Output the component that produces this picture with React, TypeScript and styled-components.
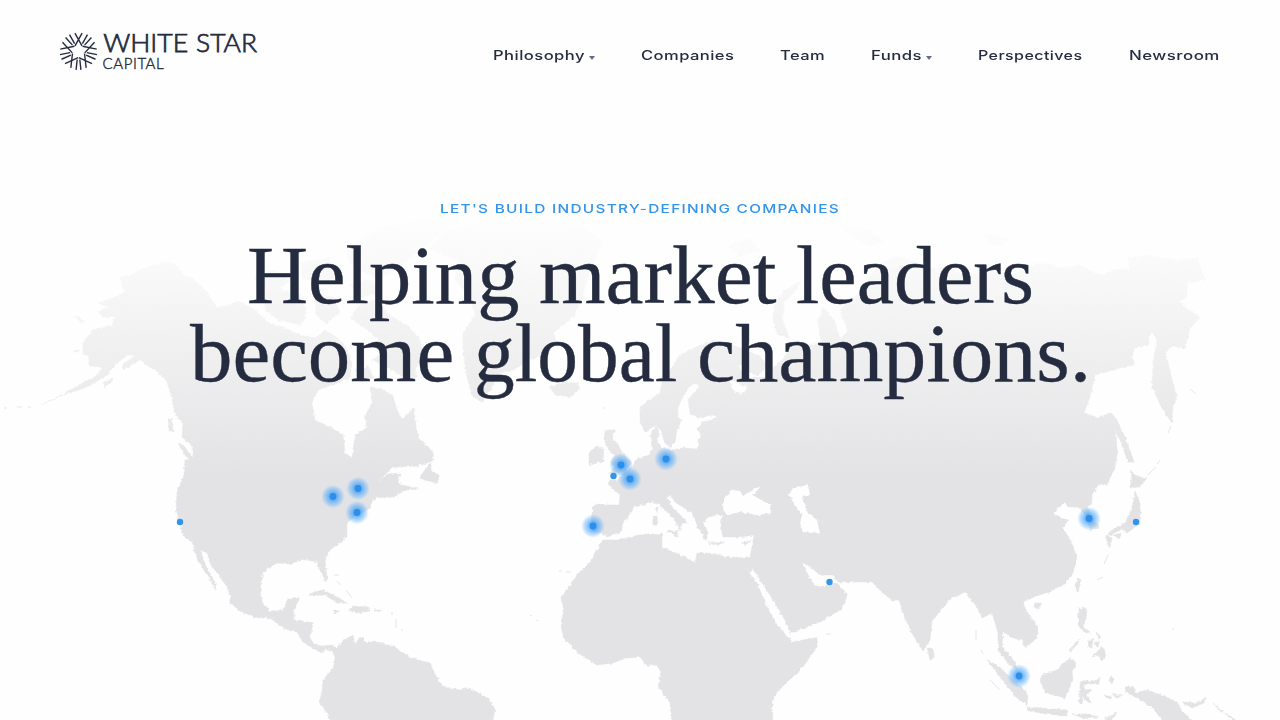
import React, { useLayoutEffect, useRef, useState } from 'react';
import styled, { createGlobalStyle } from 'styled-components';

const INK = '#252c40';
const BLUE = '#3294ea';

const GlobalStyle = createGlobalStyle`
  *, *::before, *::after { box-sizing: border-box; }
  body { margin: 0; background: #fefefe; overflow: hidden; }
`;

const Page = styled.div`
  position: relative;
  width: 1280px;
  height: 720px;
  overflow: hidden;
  background: #fefefe;
  color: ${INK};
`;

const MapLayer = styled.svg`
  position: absolute;
  inset: 0;
  width: 1280px;
  height: 720px;
`;

const Header = styled.header`
  position: relative;
  display: flex;
  justify-content: space-between;
  align-items: flex-start;
  padding: 30px 60px 0;
  height: 110px;
`;

const Logo = styled.svg`
  display: block;
  width: 200px;
  height: 42px;
  overflow: visible;
`;

const Nav = styled.nav`
  display: flex;
  gap: 46px;
  padding-top: 16px;
`;

const NavItem = styled.a`
  display: flex;
  align-items: center;
  gap: 4px;
  font: 500 12.8px/20px Inter, sans-serif;
  letter-spacing: 0.35px;
  color: ${INK};
  text-decoration: none;
`;

const Caret = styled.i`
  margin-top: 4px;
  border: solid transparent;
  border-width: 4px 3px 0;
  border-top-color: #626c82;
`;

const Hero = styled.main`
  position: relative;
  display: flex;
  flex-direction: column;
  align-items: center;
`;

const Eyebrow = styled.p`
  margin: 89px 0 0;
  font: 500 11.8px/20px Inter, sans-serif;
  letter-spacing: 1px;
  color: ${BLUE};
`;

const Headline = styled.h1`
  display: flex;
  flex-direction: column;
  align-items: center;
  margin: 17px 0 0;
  font: 400 83px/78px 'Liberation Serif', serif;
  -webkit-text-stroke: 0.35px ${INK};
`;

const HeadlineRow = styled.span`
  display: flex;
  gap: 20px;
  padding-left: 1px;
`;

const FitBox = styled.span<{ $width: number }>`
  display: block;
  width: ${(p) => p.$width}px;
  white-space: nowrap;
`;

const FitInner = styled.span`
  display: inline-block;
  transform-origin: 0 50%;
`;

/* Stretches a single line of text to an exact width. */
function FitText({ width, children }: { width: number; children: string }) {
  const ref = useRef<HTMLSpanElement>(null);
  const [scale, setScale] = useState(1);
  useLayoutEffect(() => {
    if (ref.current) setScale(width / ref.current.offsetWidth);
  }, [width]);
  return (
    <FitBox $width={width}>
      <FitInner ref={ref} style={{ transform: `scaleX(${scale})` }}>{children}</FitInner>
    </FitBox>
  );
}

const LAND = [
  // North and South America
  '168,262 160,263 150,266 140,270 131,275 121,277 122,285 125,292 113,298 98,303 108,307 98,312 103,317 115,317 112,325 93,330 88,337 83,342 83,353 90,357 88,365 102,368 98,375 83,383 67,392 42,405 63,395 87,387 107,375 117,363 128,355 135,355 123,365 123,370 140,360 147,365 158,372 167,382 172,400 177,417 183,423 182,437 188,442 193,447 193,459 185,460 184,475 177,492 176,510 180,523 183,535 192,542 195,553 202,567 210,580 216,590 215,582 208,570 203,560 201,550 207,553 210,563 220,577 228,588 231,597 229,602 240,611 257,618 270,618 283,628 297,632 303,642 313,648 322,653 325,649 332,650 335,657 334,667 323,680 322,693 319,702 327,713 332,724 492,724 495,710 490,700 470,688 460,690 443,687 437,678 430,663 410,658 395,647 377,642 367,642 360,637 355,645 353,635 343,640 337,648 332,645 323,646 315,645 310,638 313,623 303,621 293,620 295,608 300,597 288,599 283,610 270,611 262,602 260,590 263,572 275,563 290,564 303,559 317,562 321,572 326,582 327,577 325,562 328,552 347,537 347,523 352,518 370,508 372,500 377,497 390,498 407,490 418,489 407,486 398,483 400,473 388,474 377,482 393,467 417,466 433,461 433,452 418,437 415,420 414,408 402,419 397,410 393,396 380,388 370,387 372,402 365,417 367,428 355,435 352,458 345,453 343,435 330,427 315,420 312,403 318,390 335,384 350,378 352,362 345,345 335,336 325,330 315,338 300,335 285,328 268,322 255,310 240,301 217,308 207,292 195,280 183,275 177,265',
  // Europe, Asia and Africa
  '593,507 595,504 610,505 619,505 620,495 608,484 610,480 618,480 622,475 632,467 638,458 650,455 652,447 650,435 657,425 659,435 657,442 663,448 670,450 683,448 698,449 698,440 702,435 697,430 703,422 718,418 713,415 698,418 690,413 688,400 700,385 693,383 685,393 678,407 678,417 682,420 677,430 675,442 670,447 665,443 660,428 655,425 645,432 640,423 640,407 660,393 662,383 672,367 680,355 700,345 713,340 728,343 745,350 760,356 768,366 758,376 745,370 748,362 738,366 748,378 765,377 775,366 785,357 790,347 806,345 821,343 818,322 823,307 834,320 840,338 848,332 840,310 850,300 862,292 870,276 882,262 897,256 915,262 930,268 950,268 965,276 985,270 1013,274 1040,263 1063,268 1080,265 1100,275 1120,268 1130,270 1127,258 1147,255 1177,260 1198,258 1200,268 1205,280 1187,283 1187,297 1178,302 1200,318 1190,328 1185,348 1173,346 1165,352 1168,363 1173,383 1177,397 1173,407 1172,423 1163,410 1152,387 1153,363 1157,340 1153,333 1148,337 1150,345 1135,347 1132,355 1135,365 1120,368 1095,375 1090,397 1084,413 1098,418 1110,413 1115,430 1118,450 1115,467 1107,485 1098,485 1092,495 1092,503 1087,507 1092,517 1099,527 1090,530 1087,517 1079,507 1068,507 1065,502 1053,513 1060,517 1068,520 1063,528 1072,543 1077,557 1073,573 1063,585 1050,592 1038,595 1023,602 1027,612 1038,627 1037,638 1025,648 1022,640 1010,637 1003,630 1002,647 1015,662 1017,670 1007,662 998,650 998,633 992,613 982,618 977,607 965,592 950,599 940,612 932,621 930,640 923,651 913,635 905,618 899,600 892,600 883,593 872,582 855,582 838,582 833,575 820,575 808,565 802,563 812,582 818,587 830,585 837,583 848,595 840,610 820,622 790,633 785,620 770,595 752,568 750,573 743,565 757,583 767,607 775,622 787,637 793,642 817,637 817,647 803,667 777,692 772,703 773,724 673,724 670,703 658,687 661,673 657,665 647,666 640,657 627,658 613,663 597,665 578,653 563,637 561,623 564,610 561,598 577,575 590,562 603,540 617,540 640,535 662,534 662,547 687,558 695,563 697,553 707,553 727,557 750,558 754,535 740,537 723,537 720,523 723,515 715,515 707,518 703,523 708,532 706,541 697,525 692,513 675,502 670,495 667,498 673,508 688,523 682,523 680,531 675,520 660,505 653,502 635,507 623,523 620,533 607,537 602,533 592,532 591,520',
  // Greenland, Iceland, Canadian Arctic
  '463,333 463,353 467,377 473,397 483,402 490,390 500,373 513,370 530,360 547,353 557,343 553,333 573,317 583,297 590,270 603,242 580,225 530,219 480,222 445,232 430,248 460,262 455,280 470,297 475,315',
  '550,387 556,385 563,382 577,383 580,388 570,397 555,395',
  '350,318 362,302 376,300 390,315 410,328 420,340 424,355 415,370 418,378 405,377 395,372 385,365 372,360 387,348 370,332',
  '345,248 380,228 430,218 450,226 420,250 396,270 375,278 350,264',
  '264,292 280,289 300,295 307,312 301,325 280,320 265,310',
  '255,277 275,270 290,282 275,291 258,290',
  '315,300 332,296 340,312 326,324 316,315',
  '300,262 328,258 340,274 320,284 303,278',
  '350,284 372,280 380,292 360,298',
  '355,370 368,366 374,378 362,382',
  // British Isles
  '605,430 615,430 612,438 618,445 622,452 631,463 625,472 608,474 615,467 610,462 615,455 610,452 605,443',
  '589,465 589,452 597,446 604,448 603,461',
  // Arctic Eurasia
  '773,322 774,305 783,292 800,281 797,288 785,302 782,318 789,338 778,335',
  '728,246 750,238 760,250 740,256',
  '838,226 868,230 884,241 868,246',
  '985,234 1010,238 1000,246 988,243',
  // Pacific rim islands
  '1110,413 1116,418 1125,437 1134,462 1128,462 1120,440 1113,425',
  '1130,470 1137,476 1147,478 1140,487 1130,488 1132,478',
  '1135,491 1140,503 1141,523 1127,533 1122,529 1110,535 1108,533 1117,527 1125,523 1130,513 1133,503',
  '1106,535 1112,538 1110,548 1107,543',
  '1114,535 1122,533 1119,539',
  '1078,578 1081,580 1078,593 1075,587',
  '1035,603 1042,603 1038,609 1034,607',
  '1079,608 1087,609 1086,620 1083,627 1090,632 1086,633 1078,625',
  '1097,652 1103,647 1106,655 1102,661 1098,655 1092,657',
  '1088,641 1093,639 1092,648 1089,647', '1096,632 1101,637 1098,640', '1094,643 1099,641 1098,648',
  '1069,650 1079,639 1078,643 1071,651',
  '1070,657 1076,663 1072,672 1073,680 1065,698 1045,693 1040,680 1042,675 1057,670',
  '987,660 997,665 1010,677 1023,688 1028,695 1027,705 1017,698 1000,677',
  '1027,707 1042,708 1067,710 1067,716 1047,714 1029,711',
  '1080,682 1098,680 1100,677 1099,683 1083,685 1085,690 1092,689 1086,695 1092,703 1087,702 1083,696 1082,704 1078,702 1080,692',
  '1111,676 1114,679 1112,684 1109,681', '1104,696 1112,696 1110,699', '1113,694 1122,696 1115,698',
  '1072,714 1087,714 1098,717 1083,718', '1104,719 1117,712 1111,721',
  '1125,687 1133,686 1135,693 1147,690 1162,695 1177,702 1182,711 1195,724 1165,724 1160,717 1152,707 1137,698 1126,692',
  '1182,702 1198,703 1206,697 1204,703 1192,708', '1214,704 1223,712 1220,712', '1226,713 1237,721 1232,720',
  '927,647 933,649 935,657 930,660',
  // Mediterranean
  '668,531 678,531 677,537', '653,516 658,516 657,525 653,525', '655,508 658,507 658,514', '708,543 725,542 718,545', '741,543 750,541 745,545',
  // Caribbean and Newfoundland
  '420,478 424,471 431,463 431,471 439,475 438,483 428,481',
  '309,595 316,591 323,590 337,597 347,603 337,603 325,595',
  '353,606 368,607 370,611 358,613 348,611', '332,610 340,611 335,613', '374,610 381,610 380,612',
  // North Pacific
  '178,443 184,446 193,458 191,461 184,454', '168,419 172,418 173,432 169,431',
  '103,383 114,378 110,384 104,387', '74,316 80,317 84,323 78,320', '74,351 79,350 78,353',
];

const SEAS = [
  '732,490 740,491 743,496 760,486 753,495 770,505 772,513 757,515 740,512 727,515 722,508 725,497',
  '793,488 808,485 810,495 802,497 808,513 817,520 820,533 803,532 800,523 802,515 795,505 789,495',
  '729,380 738,382 742,386 748,387 741,394 734,391',
];

const SPECKS = 'M4 408h3M17 407h5M28 407h3M334 575h5M337 581l4 4M346 590l6 8M392 612v3M396 619v9M401 630h2M376 643h8M559 571h3M566 572h5M530 615l2 1M536 620l2 1M976 630v10M981 650l2 4M990 680l10 10M1108 555l-4 9M1097 580l6 -3M1148 475l8 -8M1157 464l3 -4M1168 433l3 -7M1190 389l6 5M826 634h5M1172 629h2M603 408h2M1157 709h4';

const OFFICES: [number, number][] = [[333, 496.5], [358, 488.5], [357, 512.5], [621, 465], [630, 479], [666, 459], [593, 526], [1089, 518.5], [1019, 676]];
const PINS: [number, number][] = [[180, 522], [613.5, 476], [829.5, 582], [1136, 522]];

function WorldMap() {
  return (
    <MapLayer viewBox="0 0 1280 720" aria-hidden="true">
      <defs>
        <linearGradient id="land" gradientUnits="userSpaceOnUse" x1="0" y1="205" x2="0" y2="475">
          <stop offset="0" stopColor="#fefefe" />
          <stop offset=".2" stopColor="#fafafa" />
          <stop offset=".5" stopColor="#f1f1f2" />
          <stop offset="1" stopColor="#e3e3e5" />
        </linearGradient>
        <radialGradient id="glow">
          <stop offset="0" stopColor="#2b90f0" stopOpacity=".9" />
          <stop offset=".4" stopColor="#3c9cf5" stopOpacity=".64" />
          <stop offset=".75" stopColor="#5cb0fa" stopOpacity=".36" />
          <stop offset="1" stopColor="#7cc2ff" stopOpacity="0" />
        </radialGradient>
        <filter id="coast" filterUnits="userSpaceOnUse" x="0" y="200" width="1280" height="520" colorInterpolationFilters="sRGB">
          <feTurbulence type="fractalNoise" baseFrequency=".3" numOctaves="2" seed="4" />
          <feDisplacementMap in="SourceGraphic" scale="3.6" xChannelSelector="R" yChannelSelector="G" />
        </filter>
      </defs>
      <g filter="url(#coast)">
        {LAND.map((points) => <polygon key={points} points={points} fill="url(#land)" stroke="url(#land)" strokeWidth=".5" />)}
        {SEAS.map((points) => <polygon key={points} points={points} fill="#fefefe" />)}
      </g>
      <path d={SPECKS} stroke="#e6e6e8" strokeWidth="1" fill="none" />
      {OFFICES.map(([x, y]) => (
        <g key={x}>
          <circle cx={x} cy={y} r="12" fill="url(#glow)" />
          <circle cx={x} cy={y} r="3.4" fill="#2b8fee" />
        </g>
      ))}
      {PINS.map(([x, y]) => <circle key={x} cx={x} cy={y} r="3.2" fill={BLUE} />)}
    </MapLayer>
  );
}

function Brand() {
  return (
    <Logo viewBox="0 0 200 42" role="img" aria-label="White Star Capital">
      <g stroke={INK} strokeWidth="1.4" transform="translate(18.5 21.2)">
        {[0, 72, 144, 216, 288].map((angle) => (
          <path key={angle} transform={`rotate(${angle})`} d="M-3.6 -18L3.5 -5.4M3.6 -18L-3.5 -5.4M-9 -16.5L-3.9 -7.6M9 -16.5L3.9 -7.6" />
        ))}
      </g>
      <g fill={INK} stroke={INK} fontFamily="Lato, sans-serif" fontWeight="300">
        <text x="43.2" y="22.4" fontSize="25.4" strokeWidth=".75" textLength="85" lengthAdjust="spacingAndGlyphs">WHITE</text>
        <text x="136" y="22.4" fontSize="25.4" strokeWidth=".75" textLength="61" lengthAdjust="spacingAndGlyphs">STAR</text>
        <text x="42.6" y="39.3" fontSize="15" strokeWidth=".4" textLength="61" lengthAdjust="spacing">CAPITAL</text>
      </g>
    </Logo>
  );
}

const LINKS = [
  { label: 'Philosophy', width: 92, menu: true },
  { label: 'Companies', width: 93 },
  { label: 'Team', width: 45 },
  { label: 'Funds', width: 51, menu: true },
  { label: 'Perspectives', width: 105 },
  { label: 'Newsroom', width: 91 },
];

const HEADLINE = [
  [{ word: 'Helping', width: 272 }, { word: 'market', width: 237 }, { word: 'leaders', width: 238 }],
  [{ word: 'become', width: 264 }, { word: 'global', width: 203 }, { word: 'champions.', width: 394 }],
];

export default function App() {
  return (
    <Page>
      <GlobalStyle />
      <WorldMap />
      <Header>
        <Brand />
        <Nav>
          {LINKS.map(({ label, width, menu }) => (
            <NavItem key={label}>
              <FitText width={width}>{label}</FitText>
              {menu && <Caret />}
            </NavItem>
          ))}
        </Nav>
      </Header>
      <Hero>
        <Eyebrow><FitText width={400}>LET'S BUILD INDUSTRY-DEFINING COMPANIES</FitText></Eyebrow>
        <Headline>
          {HEADLINE.map((row, i) => (
            <HeadlineRow key={i}>
              {row.map(({ word, width }) => <FitText key={word} width={width}>{word}</FitText>)}
            </HeadlineRow>
          ))}
        </Headline>
      </Hero>
    </Page>
  );
}
